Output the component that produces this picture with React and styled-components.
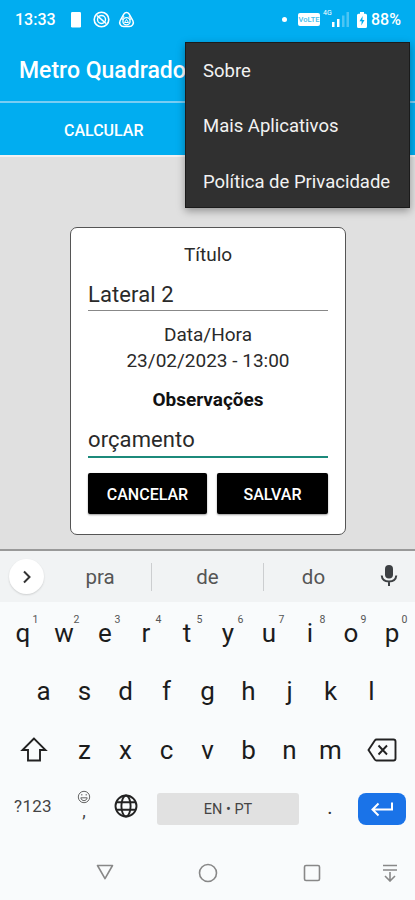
import styled, { createGlobalStyle } from "styled-components";

const numberRow = ["q", "w", "e", "r", "t", "y", "u", "i", "o", "p"];
const homeRow = ["a", "s", "d", "f", "g", "h", "j", "k", "l"];
const bottomRow = ["z", "x", "c", "v", "b", "n", "m"];
const menuItems = ["Sobre", "Mais Aplicativos", "Política de Privacidade"];

const StatusBar = () => (
  <Status>
    <Clock>13:33</Clock>
    <svg width="66" height="18" viewBox="0 0 66 18" fill="none" stroke="#fff">
      <rect x="1" y="1" width="10" height="15.5" rx="1.2" fill="#fff" stroke="none" />
      <circle cx="31.5" cy="8.5" r="7.3" strokeWidth="1.6" />
      <circle cx="31.5" cy="8.5" r="4" strokeWidth="1.4" />
      <path d="M27 4.5l9 8" strokeWidth="1.6" />
      <path d="M56.5 1.4c1.2 0 2 .6 2.7 1.7l3.600 6.400c1.500 2.900-.4 6-3.600 6h-5.400c-3.200 0-5.100-3.100-3.600-6l3.600-6.400c.7-1.100 1.500-1.700 2.700-1.700z" strokeWidth="1.5" />
      <circle cx="56.5" cy="10.3" r="3.6" strokeWidth="1.3" />
      <path d="M56.5 8.5l2 3h-4zM54 5l-2 4M59 5l2 4" strokeWidth="1" />
    </svg>
    <Dot />
    <Volte>VoLTE</Volte>
    <Network>4G</Network>
    <svg width="18" height="15" viewBox="0 0 18 15" fill="#fff">
      <rect x="0" y="10" width="2.5" height="5" />
      <rect x="5" y="7" width="2.5" height="8" />
      <rect x="10" y="3.5" width="2.5" height="11.5" opacity=".3" />
      <rect x="14.5" y="0" width="2.5" height="15" opacity=".3" />
    </svg>
    <Battery width="10" height="16" viewBox="0 0 10 16">
      <path d="M3 0h4v1.800h1.500Q10 1.800 10 3.300v11.200Q10 16 8.500 16h-7Q0 16 0 14.500V3.300Q0 1.800 1.500 1.800H3z" fill="#fff" />
      <path d="M5.700 4L2.500 9.300h2.200L4.300 13.500 7.500 8H5.400z" fill="#01adf0" />
    </Battery>
    <Percent>88%</Percent>
  </Status>
);

const SaveDialog = () => (
  <Dialog>
    <Label>Título</Label>
    <Field>Lateral 2</Field>
    <DateLabel>Data/Hora</DateLabel>
    <Label>23/02/2023 - 13:00</Label>
    <NotesLabel>Observações</NotesLabel>
    <Field $active>orçamento</Field>
    <Actions>
      <Button>CANCELAR</Button>
      <Button>SALVAR</Button>
    </Actions>
  </Dialog>
);

const Suggestions = () => (
  <SuggestionBar>
    <Expand>
      <svg width="12" height="14" viewBox="0 0 12 14" fill="none" stroke="#333" strokeWidth="2">
        <path d="M3 1.500L8.500 7 3 12.500" />
      </svg>
    </Expand>
    <Word>pra</Word>
    <Word $line>de</Word>
    <Word $line>do</Word>
    <Mic width="18" height="24" viewBox="0 0 18 24">
      <rect x="5" y="0" width="8" height="13.5" rx="4" fill="#3d4043" />
      <path d="M1.700 10.500c.4 4 3.500 6 7.300 6s6.900-2 7.300-6M9 16.500V21" fill="none" stroke="#3d4043" strokeWidth="2" />
    </Mic>
  </SuggestionBar>
);

const Keyboard = () => (
  <Keys>
    <Row>
      {numberRow.map((key, i) => (
        <Key key={key}>
          {key}
          <Hint>{(i + 1) % 10}</Hint>
        </Key>
      ))}
    </Row>
    <Row>
      {homeRow.map((key) => (
        <Key key={key}>{key}</Key>
      ))}
    </Row>
    <Row>
      <SideKey>
        <svg width="28" height="26" viewBox="0 0 28 26" fill="none" stroke="#222" strokeWidth="1.9">
          <path d="M14 1.500L2.500 13H8v10.500h12V13h5.500z" />
        </svg>
      </SideKey>
      {bottomRow.map((key) => (
        <Key key={key}>{key}</Key>
      ))}
      <SideKey>
        <svg width="30" height="24" viewBox="0 0 30 24" fill="none" stroke="#222" strokeWidth="1.9">
          <path d="M9.500 1.500h17q2 0 2 2v17q0 2-2 2h-17q-1 0-1.700-1L1.500 12l6.300-9.500q.7-1 1.700-1zM11.500 7.500l8.500 9M20 7.500l-8.500 9" />
        </svg>
      </SideKey>
    </Row>
    <FunctionRow>
      <Symbols>?123</Symbols>
      <EmojiKey>
        <svg width="14" height="14" viewBox="0 0 14 14" fill="none" stroke="#666">
          <circle cx="7" cy="7" r="5.7" />
          <path d="M3.800 7.800c.8 3.800 5.600 3.800 6.400 0zM4.800 4v1.500M9.200 4v1.500" />
        </svg>
        <span>,</span>
      </EmojiKey>
      <GlobeKey>
        <svg width="24" height="24" viewBox="0 0 24 24" fill="none" stroke="#222" strokeWidth="1.9">
          <circle cx="12" cy="12" r="10.5" />
          <ellipse cx="12" cy="12" rx="4.6" ry="10.5" />
          <path d="M2.500 8.200h19M2.500 15.800h19" />
        </svg>
      </GlobeKey>
      <Space>EN • PT</Space>
      <Period>.</Period>
      <Enter>
        <svg width="24" height="16" viewBox="0 0 24 16" fill="none" stroke="#fff" strokeWidth="2">
          <path d="M22 1.500v7H2.500M8.500 2.500l-6 6 6 6" />
        </svg>
      </Enter>
    </FunctionRow>
  </Keys>
);

const Navigation = () => (
  <NavBar>
    <svg width="18" height="17" viewBox="0 0 18 17">
      <path d="M1.500 1.500h15L9 14.700z" strokeLinejoin="round" />
    </svg>
    <svg width="20" height="20" viewBox="0 0 20 20">
      <circle cx="10" cy="10" r="8.5" />
    </svg>
    <svg width="18" height="18" viewBox="0 0 18 18">
      <rect x="1.5" y="1.5" width="15" height="15" rx="1.5" />
    </svg>
    <svg width="16" height="18" viewBox="0 0 16 18">
      <path d="M1 1.500h14M1 6h14M8 8v9M3 12l5 5 5-5" />
    </svg>
  </NavBar>
);

const App = () => {
  return (
    <Screen>
      <GlobalStyle />
      <Header>
        <StatusBar />
        <Title>Metro Quadrado</Title>
        <Tabs>
          <Tab>CALCULAR</Tab>
        </Tabs>
        <Menu>
          {menuItems.map((item) => (
            <MenuItem key={item}>{item}</MenuItem>
          ))}
        </Menu>
      </Header>
      <Content>
        <SaveDialog />
      </Content>
      <Suggestions />
      <Keyboard />
      <Navigation />
    </Screen>
  );
};

const GlobalStyle = createGlobalStyle`
  * {
    box-sizing: border-box;
  }
  body {
    margin: 0;
    font-family: Roboto, sans-serif;
    overflow: hidden;
  }
  svg {
    display: block;
    flex: none;
  }
`;

const Screen = styled.div`
  display: flex;
  flex-direction: column;
  width: 415px;
  height: 900px;
  background: #f9fbfc;
`;

const Header = styled.header`
  position: relative;
  height: 157px;
  color: #fff;
  background: #01adf0;
  border-bottom: 2px solid #f3f1f2;
`;

const Status = styled.div`
  display: flex;
  align-items: center;
  height: 39px;
  padding: 0 13px 0 15px;
`;

const Clock = styled.span`
  width: 55px;
  font-size: 16px;
  font-weight: 500;
`;

const Dot = styled.span`
  width: 5px;
  height: 5px;
  margin-left: 146px;
  border-radius: 50%;
  background: #fff;
`;

const Volte = styled.span`
  width: 22px;
  height: 13px;
  margin-left: 11px;
  border-radius: 2px;
  background: #fff;
  color: #45bdec;
  font-size: 7.5px;
  font-weight: 500;
  line-height: 13px;
  text-align: center;
`;

const Network = styled.span`
  align-self: flex-start;
  width: 9px;
  margin: 9px 0 0 3px;
  font-size: 7px;
  line-height: 8px;
`;

const Battery = styled.svg`
  margin: 0 4px 0 7px;
`;

const Percent = styled.span`
  font-size: 16px;
  font-weight: 500;
`;

const Title = styled.h1`
  height: 64px;
  margin: 0;
  padding-left: 19px;
  border-bottom: 2px solid #79cdf3;
  font-size: 23px;
  font-weight: 500;
  line-height: 64px;
  white-space: nowrap;
`;

const Tabs = styled.nav`
  display: grid;
  grid-template-columns: 1fr 1fr;
  height: 52px;
`;

const Tab = styled.div`
  font-size: 16px;
  font-weight: 500;
  line-height: 56px;
  text-align: center;
`;

const Menu = styled.div`
  position: absolute;
  top: 42px;
  right: 5px;
  width: 225px;
  height: 166px;
  border: 1px solid #1b1b1b;
  background: #303030;
  box-shadow: 0 3px 8px rgba(0, 0, 0, 0.35);
`;

const MenuItem = styled.div`
  height: 55.3px;
  padding-left: 17px;
  font-size: 18.5px;
  line-height: 57px;
  color: #f2f2f2;
  white-space: nowrap;
`;

const Content = styled.main`
  display: flex;
  justify-content: center;
  height: 394px;
  padding: 70px 0 0 1px;
  border-bottom: 2px solid #999;
  background: #e0e0e0;
`;

const Dialog = styled.section`
  display: flex;
  flex-direction: column;
  width: 276px;
  height: 308px;
  padding: 14px 17px;
  border: 1.5px solid #555;
  border-radius: 7px;
  background: #fff;
  color: #2a2a2a;
  font-size: 19px;
  text-align: center;
`;

const Label = styled.div`
  height: 26px;
  line-height: 26px;
`;

const Field = styled.div`
  height: ${(p) => (p.$active ? "45px" : "43px")};
  border-bottom: ${(p) => (p.$active ? "2px solid #1c8a7b" : "1px solid #888")};
  font-size: 22px;
  letter-spacing: 0.1px;
  line-height: ${(p) => (p.$active ? "53px" : "54px")};
  text-align: left;
`;

const DateLabel = styled(Label)`
  margin-top: 11px;
`;

const NotesLabel = styled(Label)`
  margin-top: 13px;
  font-weight: 700;
  color: #111;
`;

const Actions = styled.div`
  display: grid;
  grid-template-columns: 119px 111px;
  justify-content: space-between;
  margin-top: 15px;
`;

const Button = styled.button`
  height: 41px;
  padding: 2px 0 0;
  border: 0;
  border-radius: 2px;
  background: #000;
  color: #fff;
  font: 500 16px Roboto, sans-serif;
  box-shadow: 0 1px 2px rgba(0, 0, 0, 0.4);
`;

const SuggestionBar = styled.div`
  display: flex;
  align-items: center;
  height: 51px;
  padding-left: 9px;
  background: #f1f3f4;
`;

const Expand = styled.span`
  display: grid;
  place-items: center;
  width: 35px;
  height: 35px;
  margin-right: 5px;
  border-radius: 50%;
  background: #fff;
  box-shadow: 0 1px 2px rgba(0, 0, 0, 0.15);
`;

const Word = styled.span`
  width: ${(p) => (p.$line ? "112px" : "102px")};
  height: 28px;
  border-left: ${(p) => (p.$line ? "1px solid #ccced0" : "0")};
  color: #555;
  font-size: 20.5px;
  line-height: 29px;
  text-align: center;
  &:nth-child(4) {
    width: 100px;
  }
`;

const Mic = styled.svg`
  margin-left: 17px;
`;

const Keys = styled.div`
  height: 243px;
  padding: 1px 2px 0;
`;

const Row = styled.div`
  display: flex;
  justify-content: center;
  height: 58.3px;
`;

const Key = styled.div`
  position: relative;
  flex: none;
  width: 41px;
  color: #1c1c1c;
  font-size: 26px;
  line-height: 60px;
  text-align: center;
`;

const Hint = styled.sup`
  position: absolute;
  top: 11px;
  right: 5px;
  color: #555;
  font-size: 10.5px;
  line-height: 12px;
`;

const SideKey = styled.div`
  display: grid;
  place-items: center;
  width: 61px;
  padding-top: 3px;
`;

const FunctionRow = styled.div`
  display: flex;
  align-items: center;
  height: 57px;
  padding-left: 1px;
`;

const Symbols = styled.span`
  width: 60px;
  color: #444;
  font-size: 17px;
  letter-spacing: 0.3px;
  text-align: center;
`;

const EmojiKey = styled.span`
  display: flex;
  flex-direction: column;
  align-items: center;
  width: 42px;
  height: 33px;
  color: #444;
  font-size: 18px;
  line-height: 14px;
`;

const GlobeKey = styled.span`
  display: grid;
  justify-items: center;
  width: 41px;
`;

const Space = styled.span`
  width: 142px;
  height: 32px;
  margin: 5px 0 0 11px;
  border-radius: 3px;
  background: #e1e1e1;
  color: #444;
  font-size: 14.5px;
  line-height: 33px;
  text-align: center;
`;

const Period = styled.span`
  width: 59px;
  padding: 2px 0 0 3px;
  color: #333;
  font-size: 20px;
  text-align: center;
`;

const Enter = styled.span`
  display: grid;
  place-items: center;
  width: 48px;
  height: 32px;
  margin-top: 5px;
  border-radius: 8px;
  background: #1a73e8;
`;

const NavBar = styled.nav`
  display: grid;
  grid-template-columns: 103px 103px 105px 52px;
  place-items: center;
  height: 55px;
  padding-left: 53px;
  fill: none;
  stroke: #888;
  stroke-width: 1.6;
`;

export default App;
